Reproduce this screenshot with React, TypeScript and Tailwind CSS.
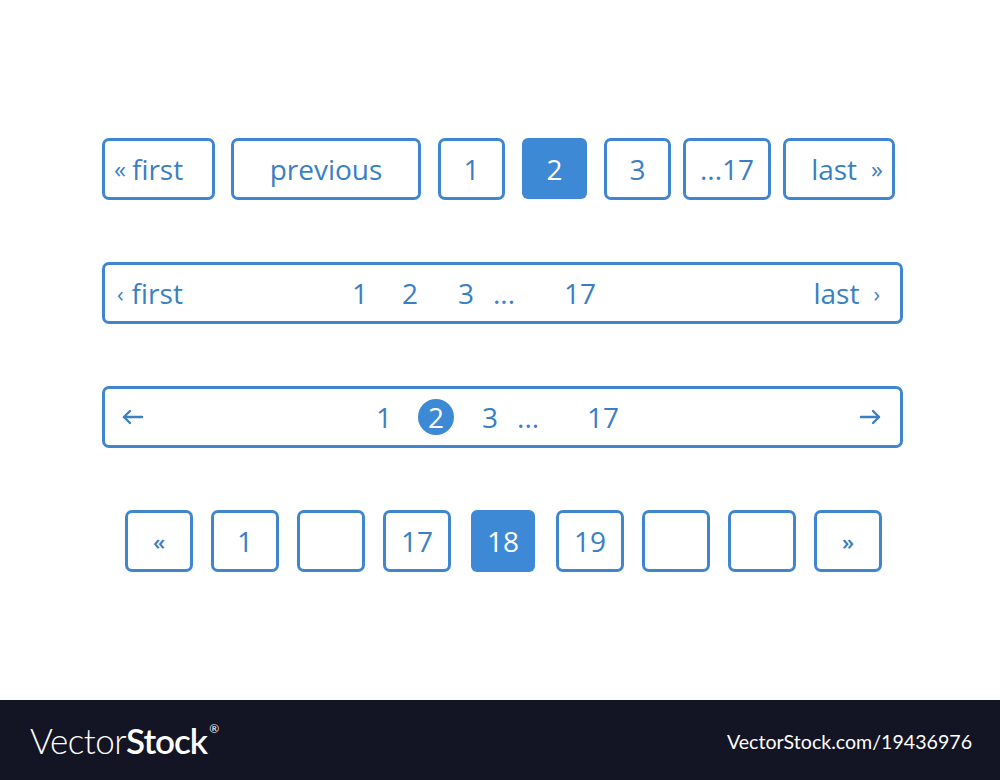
import React from 'react';

const box =
  'flex h-[62px] items-center rounded-[7px] border-[3px] border-[#3f86cf] text-[#3a7fc3]';

const Arrow = ({ dir }: { dir: 'left' | 'right' }) => (
  <svg width="24" height="16" viewBox="0 0 24 16" fill="none" stroke="#3a7fc3" strokeWidth="2.4" strokeLinecap="round" strokeLinejoin="round">
    {dir === 'left' ? (
      <>
        <path d="M21 8H3" />
        <path d="M9 2L3 8l6 6" />
      </>
    ) : (
      <>
        <path d="M3 8h18" />
        <path d="M15 2l6 6-6 6" />
      </>
    )}
  </svg>
);

const Square = ({ label, small }: { label?: string; small?: boolean }) => (
  <div className={`${box} w-[68px] justify-center ${small ? 'text-[22px] font-semibold' : ''}`}>{label}</div>
);

export default function App() {
  return (
    <div className="flex h-[780px] w-[1000px] flex-col bg-white" style={{ fontFamily: '"Open Sans", sans-serif' }}>
      <div className="flex h-[700px] flex-col gap-[62px] pt-[138px] text-[28px] leading-none">
        {/* row 1 */}
        <div className="flex pl-[102px]">
          <div className={`${box} w-[113px] pl-[9px]`}>
            <span className="mr-[6px] text-[24px]">«</span>first
          </div>
          <div className={`${box} ml-[16px] w-[190px] justify-center`}>previous</div>
          <div className={`${box} ml-[17px] w-[67px] justify-center`}>1</div>
          <div className="ml-[17px] flex h-[61px] w-[65px] items-center justify-center rounded-[6px] bg-[#3d89d6] text-white">2</div>
          <div className={`${box} ml-[17px] w-[67px] justify-center`}>3</div>
          <div className={`${box} ml-[12px] w-[88px] justify-center`}>...17</div>
          <div className={`${box} ml-[12px] w-[112px] justify-end pr-[9px]`}>
            last<span className="ml-[14px] text-[24px]">»</span>
          </div>
        </div>

        {/* row 2 */}
        <div className="flex pl-[102px]">
          <div className={`${box} w-[801px] pl-[12px] pr-[20px]`}>
            <span className="text-[22px]">‹</span>
            <span className="ml-[8px]">first</span>
            <span className="ml-[169px]">1</span>
            <span className="ml-[34px]">2</span>
            <span className="ml-[40px]">3</span>
            <span className="ml-[19px]">...</span>
            <span className="ml-[49px]">17</span>
            <span className="ml-auto">last</span>
            <span className="ml-[14px] text-[22px]">›</span>
          </div>
        </div>

        {/* row 3 */}
        <div className="flex pl-[102px]">
          <div className={`${box} w-[801px] pl-[16px] pr-[18px]`}>
            <Arrow dir="left" />
            <span className="ml-[231px]">1</span>
            <span className="ml-[26px] flex h-[36px] w-[36px] items-center justify-center rounded-full bg-[#3d89d6] text-white">2</span>
            <span className="ml-[28px]">3</span>
            <span className="ml-[19px]">...</span>
            <span className="ml-[48px]">17</span>
            <span className="ml-auto">
              <Arrow dir="right" />
            </span>
          </div>
        </div>

        {/* row 4 */}
        <div className="flex items-center gap-[18px] pl-[125px]">
          <Square label="«" small />
          <Square label="1" />
          <Square />
          <Square label="17" />
          <div className="ml-[2px] mr-[3px] flex h-[62px] w-[64px] items-center justify-center rounded-[6px] bg-[#3d89d6] text-white">18</div>
          <Square label="19" />
          <Square />
          <Square />
          <Square label="»" small />
        </div>
      </div>

      <div className="flex h-[80px] items-center justify-between bg-[#131424] pl-[30px] pr-[28px] text-white" style={{ fontFamily: 'Lato, sans-serif' }}>
        <div className="flex items-start text-[35px] leading-none tracking-[-0.5px]">
          <span className="font-light">Vector</span>
          <span className="font-semibold tracking-[-1px]">Stock</span>
          <span className="ml-[2px] text-[12px]">®</span>
        </div>
        <div className="pt-[4px] text-[19.6px]">VectorStock.com/19436976</div>
      </div>
    </div>
  );
}
